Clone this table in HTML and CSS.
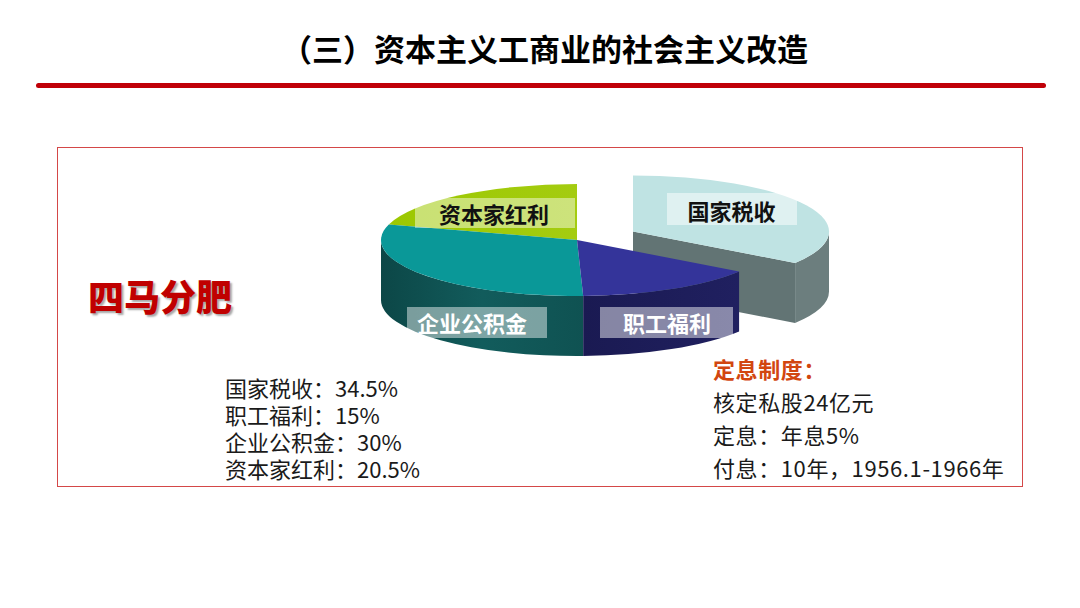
FILE: index.html
```html
<!DOCTYPE html>
<html lang="zh-CN">
<head>
<meta charset="utf-8">
<title>资本主义工商业的社会主义改造</title>
<link rel="stylesheet" href="styles.css">
</head>
<body>
<h1 class="title">（三）资本主义工商业的社会主义改造</h1>
<div class="rule"></div>
<section class="panel">
  <div class="upper">
    <div class="slogan">四马分肥</div>
    <svg class="pie" width="460" height="180" viewBox="375 172 460 180" xmlns="http://www.w3.org/2000/svg">
      <defs>
        <linearGradient id="tealSide" x1="0" y1="0" x2="1" y2="0">
          <stop offset="0" stop-color="#0c4747"/>
          <stop offset="0.5" stop-color="#125c5c"/>
          <stop offset="1" stop-color="#0f5252"/>
        </linearGradient>
        <linearGradient id="blueSide" x1="0" y1="0" x2="1" y2="0">
          <stop offset="0" stop-color="#1a1a52"/>
          <stop offset="1" stop-color="#202060"/>
        </linearGradient>
        <linearGradient id="greenTop" x1="0" y1="0" x2="1" y2="0">
          <stop offset="0" stop-color="#9cc800"/>
          <stop offset="1" stop-color="#a4cc10"/>
        </linearGradient>
      </defs>
      <!-- exploded slice: 国家税收 -->
      <path d="M633 231.5 L795.1 263 L795.1 323 L633 291.5 Z" fill="#627474"/>
      <path d="M795.1 263 A196 56 0 0 0 829 231.5 L829 291.5 A196 56 0 0 1 795.1 323 Z" fill="#6c7e7e"/>
      <path d="M633 231.5 L795.1 263 A196 56 0 0 0 633 175.5 Z" fill="#bfe3e3"/>
      <!-- sides -->
      <path d="M381 240 A196 56 0 0 0 583.2 296 L583.2 356 A196 56 0 0 1 381 300 Z" fill="url(#tealSide)"/>
      <path d="M583.2 296 A196 56 0 0 0 739.1 271.5 L739.1 331.5 A196 56 0 0 1 583.2 356 Z" fill="url(#blueSide)"/>
      <!-- tops -->
      <path d="M577 240 L577 184 A196 56 0 0 0 388.8 224.4 Z" fill="url(#greenTop)"/>
      <path d="M577 240 L388.8 224.4 A196 56 0 0 0 583.2 296 Z" fill="#0a9898"/>
      <path d="M577 240 L583.2 296 A196 56 0 0 0 739.1 271.5 Z" fill="#34349a"/>
      <!-- labels -->
      <rect x="415" y="198" width="160" height="30" fill="#ffffff" fill-opacity="0.45"/>
      <text class="lbl dark" x="494" y="223">资本家红利</text>
      <rect x="667" y="193" width="130" height="32" fill="#ffffff" fill-opacity="0.5"/>
      <text class="lbl dark" x="731.5" y="220">国家税收</text>
      <rect x="407" y="307" width="140" height="31" fill="#ffffff" fill-opacity="0.45"/>
      <text class="lbl light" x="472" y="332">企业公积金</text>
      <rect x="600" y="307" width="133" height="31" fill="#ffffff" fill-opacity="0.47"/>
      <text class="lbl light" x="667" y="332">职工福利</text>
    </svg>
  </div>
  <div class="lower">
    <div class="stats">
      <p>国家税收：34.5%</p>
      <p>职工福利：15%</p>
      <p>企业公积金：30%</p>
      <p>资本家红利：20.5%</p>
    </div>
    <div class="dingxi">
      <p class="head">定息制度：</p>
      <p>核定私股24亿元</p>
      <p>定息：年息5%</p>
      <p>付息：10年，1956.1-1966年</p>
    </div>
  </div>
</section>
</body>
</html>
```
FILE: styles.css
```css
* { box-sizing: border-box; }
html, body { margin: 0; padding: 0; background: #ffffff; }
body {
  width: 1080px;
  height: 608px;
  overflow: hidden;
  font-family: "Noto Sans CJK SC", "Noto Sans", sans-serif;
  color: #1a1a1a;
}
p { margin: 0; }

.title {
  margin: 28px 0 0 0;
  padding-left: 9px;
  text-align: center;
  font-size: 31px;
  line-height: 40px;
  font-weight: 700;
  color: #000000;
}

.rule {
  margin: 15px 0 0 36px;
  width: 1010px;
  height: 5px;
  border-radius: 3px;
  background: #c00008;
}

.panel {
  margin: 59px 0 0 57px;
  width: 966px;
  height: 340px;
  border: 1px solid #d44848;
  display: flex;
  flex-direction: column;
}

.upper {
  display: flex;
  height: 204px;
}

.slogan {
  width: 317px;
  padding: 127px 0 0 30px;
  font-size: 36px;
  line-height: 40px;
  font-weight: 900;
  color: #c00000;
  text-shadow: 2px 2px 2px rgba(0, 0, 0, 0.35);
  white-space: nowrap;
}

.pie {
  margin-top: 24px;
  overflow: visible;
  flex: none;
}

.lbl {
  font-family: "Noto Sans CJK SC", "Noto Sans", sans-serif;
  font-size: 22px;
  font-weight: 700;
  text-anchor: middle;
}
.lbl.dark { fill: #111111; }
.lbl.light { fill: #ffffff; }

.lower {
  display: flex;
}

.stats {
  width: 655px;
  padding: 22px 0 0 167px;
  font-size: 22px;
  line-height: 27px;
  white-space: nowrap;
}

.dingxi {
  font-size: 22px;
  line-height: 33px;
  letter-spacing: 0.6px;
  white-space: nowrap;
}
.dingxi .head {
  color: #d2460f;
  font-weight: 700;
}
```
